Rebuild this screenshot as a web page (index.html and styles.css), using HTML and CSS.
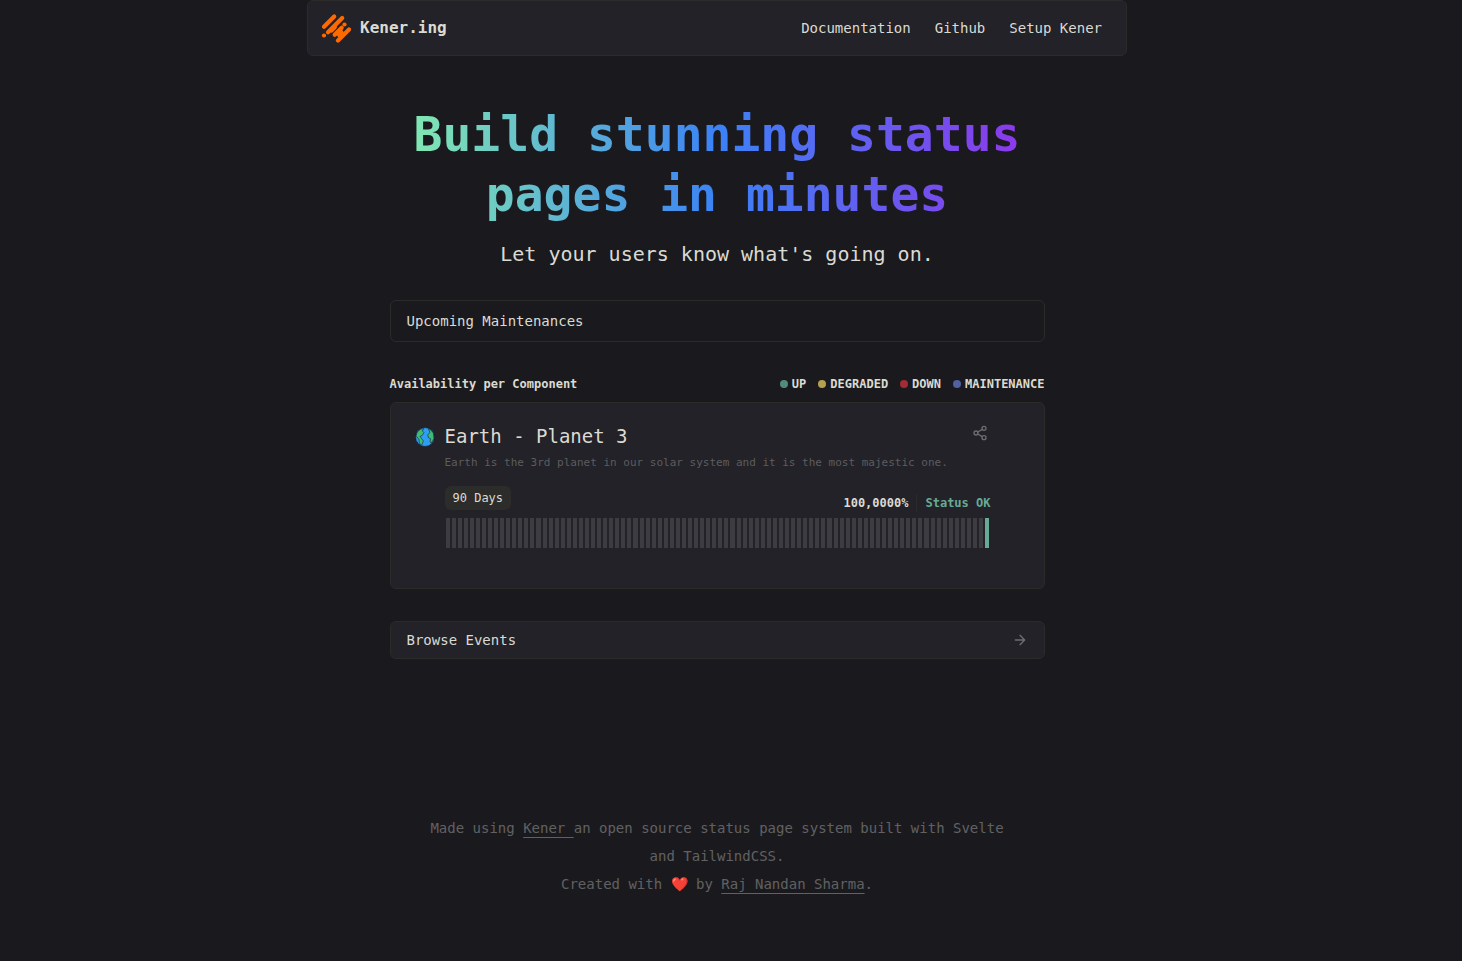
FILE: index.html
```html
<!DOCTYPE html>
<html lang="en">
<head>
    <meta charset="UTF-8">
    <meta name="viewport" content="width=device-width, initial-scale=1.0">
    <title>Kener.ing</title>
    <link rel="stylesheet" href="styles.css">
</head>
<body>
    <header class="navbar">
        <a class="brand" href="#">
            <svg class="logo" viewBox="0 0 30 30" aria-hidden="true">
                <g stroke="#ff6a00" stroke-width="4.2" stroke-linecap="round">
                    <path d="M3 13.7 L13.2 3.5"/>
                    <path d="M7 19.2 L21.2 5"/>
                    <path d="M13.7 21.7 L20.7 14.7"/>
                    <path d="M17 27.4 L28 16.4"/>
                    <path d="M10.5 17 L13.5 14" stroke-width="5"/>
                    <path d="M18.2 21.4 L20.2 19.4" stroke-width="5"/>
                    <path d="M23.5 11.5 h0.01"/>
                    <path d="M3 22.5 h0.01"/>
                </g>
            </svg>
            <span>Kener.ing</span>
        </a>
        <nav class="nav-links">
            <a href="#">Documentation</a>
            <a href="#">Github</a>
            <a href="#">Setup Kener</a>
        </nav>
    </header>

    <main class="container">
        <section class="hero">
            <h1>Build stunning status pages in minutes</h1>
            <p>Let your users know what's going on.</p>
        </section>

        <section class="maintenances">Upcoming Maintenances</section>

        <section class="availability">
            <div class="availability-head">
                <h2>Availability per Component</h2>
                <ul class="legend">
                    <li class="up">UP</li>
                    <li class="degraded">DEGRADED</li>
                    <li class="down">DOWN</li>
                    <li class="maintenance">MAINTENANCE</li>
                </ul>
            </div>

            <article class="monitor">
                <svg class="planet" viewBox="0 0 36 36" aria-hidden="true">
                    <circle cx="18" cy="18" r="17" fill="#2f9df4" stroke="#10151c" stroke-width="1"/>
                    <path fill="#3ebd72" stroke="#10151c" d="M4 9 L10 4 L16 3 L13 7 L16 10 L13 15 L9 17 L12 21 L15 25 L12 33 L8 29 L7 22 L2 16 Z"/>
                    <path fill="#3ebd72" stroke="#10151c" d="M24 3 L28 5 L33 11 L34 21 L29 29 L27 27 L28 21 L24 19 L23 14 L27 10 Z"/>
                </svg>
                <div class="monitor-body">
                    <div class="monitor-title">
                        <h3>Earth - Planet 3</h3>
                        <button class="share" aria-label="Share">
                            <svg viewBox="0 0 24 24" aria-hidden="true">
                                <circle cx="18" cy="5" r="3"/>
                                <circle cx="6" cy="12" r="3"/>
                                <circle cx="18" cy="19" r="3"/>
                                <path d="M8.59 13.51 L15.42 17.49 M15.41 6.51 L8.59 10.49"/>
                            </svg>
                        </button>
                    </div>
                    <p class="description">Earth is the 3rd planet in our solar system and it is the most majestic one.</p>
                    <div class="stats">
                        <button class="days">90 Days</button>
                        <div class="numbers">
                            <span class="uptime">100,0000%</span>
                            <span class="status">Status OK</span>
                        </div>
                    </div>
                    <div class="bars" id="bars"></div>
                </div>
            </article>
        </section>

        <a class="events" href="#">
            <span>Browse Events</span>
            <svg viewBox="0 0 24 24" aria-hidden="true">
                <path d="M5 12 h14 M12 5 l7 7 -7 7"/>
            </svg>
        </a>
    </main>

    <footer class="footer">
        <p>Made using <a href="#">Kener&nbsp;</a>an open source status page system built with Svelte and TailwindCSS.<br>
        Created with ❤️ by <a href="#">Raj Nandan Sharma</a>.</p>
    </footer>

    <script src="script.js"></script>
</body>
</html>
```
FILE: styles.css
```css
:root {
    --bg: #1a1a1e;
    --card: #222228;
    --border: #2b2b2a;
    --text: #dbdad2;
    --muted: #5d5d5e;
    --green: #68ab95;
}

* {
    box-sizing: border-box;
}

body {
    margin: 0;
    padding-right: 28px;
    background-color: var(--bg);
    color: var(--text);
    font-family: "DejaVu Sans Mono", monospace;
    font-size: 14px;
    line-height: 20px;
}

h1, h2, h3, p, ul {
    margin: 0;
    padding: 0;
}

a {
    color: inherit;
    text-decoration: none;
}

button {
    border: none;
    color: inherit;
    font: inherit;
    cursor: pointer;
}

svg {
    display: block;
    fill: none;
}

.navbar {
    max-width: 820px;
    height: 56px;
    margin: 0 auto;
    padding: 0 24px 0 13px;
    display: flex;
    align-items: center;
    justify-content: space-between;
    background-color: var(--card);
    border: 1px solid var(--border);
    border-radius: 6px;
}

.brand {
    display: flex;
    align-items: center;
    gap: 9px;
    font-size: 16px;
    font-weight: bold;
    line-height: 24px;
}

.logo {
    width: 30px;
    height: 30px;
}

.nav-links {
    display: flex;
    gap: 24px;
}

.container {
    max-width: 655px;
    margin: 0 auto;
}

.hero {
    padding: 48px 0 32px;
    text-align: center;
}

.hero h1 {
    font-size: 48px;
    line-height: 60px;
    padding: 0 24px;
    color: transparent;
    background: linear-gradient(to right, #86efac, #3b82f6, #9333ea);
    background-clip: text;
    -webkit-background-clip: text;
}

.hero p {
    margin-top: 16px;
    font-size: 20px;
    line-height: 28px;
}

.maintenances,
.events,
.monitor {
    border: 1px solid var(--border);
    border-radius: 6px;
}

.maintenances {
    padding: 10px 16px;
    margin-bottom: 32px;
}

.availability-head {
    display: flex;
    align-items: center;
    justify-content: space-between;
    margin-bottom: 8px;
    font-size: 12px;
    font-weight: bold;
}

.availability-head h2 {
    font-size: 12px;
}

.legend {
    display: flex;
    gap: 12px;
    list-style: none;
}

.legend li {
    display: flex;
    align-items: center;
    gap: 4px;
}

.legend li::before {
    content: "";
    width: 8px;
    height: 8px;
    border-radius: 50%;
}

.legend .up::before {
    background-color: #548a79;
}

.legend .degraded::before {
    background-color: #b5a04f;
}

.legend .down::before {
    background-color: #a02c34;
}

.legend .maintenance::before {
    background-color: #5060a3;
}

.monitor {
    display: flex;
    gap: 10px;
    padding: 20px 53px 40px 24px;
    margin-bottom: 32px;
    background-color: var(--card);
}

.planet {
    width: 20px;
    height: 20px;
    margin-top: 4px;
}

.monitor-body {
    flex: 1;
}

.monitor-title {
    display: flex;
    justify-content: space-between;
}

.monitor-title h3 {
    font-size: 19px;
    font-weight: normal;
    line-height: 26px;
}

.share {
    height: 20px;
    padding: 2px 3px;
    background: none;
}

.share svg,
.events svg {
    width: 16px;
    height: 16px;
    stroke: #6d6d70;
    stroke-width: 2;
    stroke-linecap: round;
    stroke-linejoin: round;
}

.description {
    margin-top: 4px;
    font-size: 11px;
    color: var(--muted);
}

.stats {
    display: flex;
    align-items: flex-start;
    justify-content: space-between;
    height: 24px;
    margin: 13px 0 8px;
    font-size: 12px;
}

.days {
    height: 24px;
    padding: 0 8px;
    border-radius: 6px;
    background-color: #2c2c2b;
}

.numbers {
    display: flex;
    margin-top: 8px;
    font-weight: bold;
    line-height: 18px;
}

.uptime {
    padding-right: 8px;
    border-right: 1px solid var(--border);
}

.status {
    padding-left: 8px;
    color: var(--green);
}

.bars {
    display: flex;
    height: 30px;
}

.bar {
    flex: 1;
    margin: 0 1px;
    background-color: #3d3d41;
}

.bar.ok {
    background-color: var(--green);
}

.events {
    display: flex;
    align-items: center;
    justify-content: space-between;
    padding: 8px 16px;
    background-color: var(--card);
}

.footer {
    max-width: 655px;
    margin: 0 auto;
    padding: 155px 32px 60px;
    text-align: center;
    line-height: 28px;
    color: #616162;
}

.footer a {
    text-decoration: underline;
    text-underline-offset: 4px;
}
```
FILE: script.js
```js
const bars = document.getElementById("bars");

// one bar per day, only today has data
for (let day = 1; day <= 90; day++) {
    const bar = document.createElement("div");
    bar.className = day === 90 ? "bar ok" : "bar";
    bars.appendChild(bar);
}
```
